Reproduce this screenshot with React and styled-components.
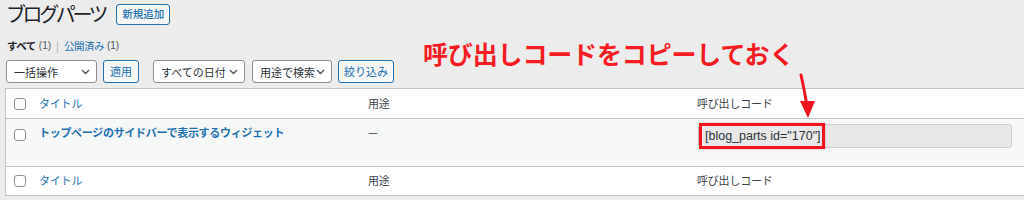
import React from "react";
import styled, { createGlobalStyle } from "styled-components";

const Global = createGlobalStyle`
  html, body { margin: 0; padding: 0; background: #ececec; }
  body { width: 1024px; height: 200px; overflow: hidden; font-family: "Noto Sans CJK JP", "Noto Sans", sans-serif; color: #2c3338; }
`;

const Page = styled.div`
  position: relative;
  padding: 0 0 0 5px;
  width: 1060px;
`;

const HeadRow = styled.div`
  display: flex;
  align-items: center;
  height: 28px;
  gap: 9px;
  padding-left: 1px;
`;

const Title = styled.h1`
  margin: 0;
  font-size: 20px;
  font-weight: 400;
  color: #1d2327;
  line-height: 28px;
  letter-spacing: -3.4px;
  padding-right: 2px;
`;

const Button = styled.button`
  box-sizing: border-box;
  height: ${p => p.$h || 23}px;
  width: ${p => p.$w}px;
  padding: 0;
  border: 1px solid #2271b1;
  border-radius: 3px;
  background: #f6f7f7;
  color: #2271b1;
  font-family: inherit;
  font-size: ${p => p.$fs || 11}px;
  font-weight: ${p => p.$medium ? 500 : 400};
  line-height: 1;
  white-space: nowrap;
  display: flex;
  align-items: center;
  justify-content: center;
`;

const SubSub = styled.div`
  margin-top: 9px;
  display: flex;
  align-items: center;
  gap: 3px;
  height: 16px;
  padding-left: 2px;
  font-size: 10.5px;
  white-space: nowrap;
`;

const Strong = styled.span`
  font-weight: 700;
  color: #1d2327;
  letter-spacing: -0.5px;
`;
const Count = styled.span`
  color: #50575e;
  font-size: 10px;
  font-family: "Liberation Sans", Arial, sans-serif;
`;
const Sep = styled.span`
  color: #a7aaad;
  margin: 0 2px;
`;
const Link = styled.span`
  color: #2271b1;
  letter-spacing: -0.5px;
`;

const Filters = styled.div`
  margin-top: 7px;
  display: flex;
  align-items: center;
  padding-left: 1px;
`;

const Select = styled.div`
  box-sizing: border-box;
  width: ${p => p.$w}px;
  height: 23px;
  border: 1px solid #8c8f94;
  border-radius: 3px;
  background: #fff;
  display: flex;
  align-items: center;
  justify-content: space-between;
  padding: 0 6px 0 7px;
  font-size: 11px;
  color: #2c3338;
  white-space: nowrap;
  flex: none;
`;

const Gap = styled.div`
  width: ${p => p.$w}px;
  flex: none;
`;

const Chevron = () => (
  <svg width="9" height="6" viewBox="0 0 9 6">
    <path d="M1 1 L4.5 4.5 L8 1" fill="none" stroke="#50575e" strokeWidth="1.4" />
  </svg>
);

const Table = styled.div`
  margin-top: 5px;
  border: 1px solid #c3c4c7;
  background: #fff;
  width: 1040px;
`;

const Row = styled.div`
  display: grid;
  grid-template-columns: 25px 329px 329px 1fr;
  align-items: ${p => p.$top ? "start" : "center"};
  height: ${p => p.$h}px;
  background: ${p => p.$alt ? "#f6f7f7" : "#fff"};
  border-top: ${p => p.$line ? "1px solid #c3c4c7" : "none"};
  font-size: 11px;
  box-sizing: border-box;
  padding-top: ${p => p.$pt || 0}px;
  padding-bottom: ${p => p.$pb || 0}px;
`;

const CheckCell = styled.div`
  padding-left: 8px;
  display: flex;
`;

const Check = styled.span`
  box-sizing: border-box;
  width: 12px;
  height: 12px;
  border: 1px solid #8c8f94;
  border-radius: 3px;
  background: #fff;
  margin-top: ${p => p.$mt || 0}px;
`;

const Cell = styled.div`
  padding-left: 8px;
  color: ${p => p.$link ? "#2271b1" : "#3c434a"};
  font-weight: ${p => p.$bold ? 700 : 400};
  line-height: 16px;
  white-space: nowrap;
  letter-spacing: ${p => p.$bold ? "-0.3px" : "-0.2px"};
`;

const CodeInput = styled.div`
  position: relative;
  box-sizing: border-box;
  margin-left: 9px;
  width: 314px;
  height: 24px;
  border: 1px solid #cfcfcf;
  border-radius: 3px;
  background: #e8e8e8;
  display: flex;
  align-items: center;
  padding-left: 6px;
  font-family: "Liberation Sans", Arial, sans-serif;
  font-size: 12.5px;
  color: #2c3338;
`;

const Highlight = styled.span`
  position: absolute;
  left: 0px;
  top: -2px;
  width: 126px;
  height: 26px;
  box-sizing: border-box;
  border: 3px solid #f0141e;
  box-shadow: 0 0 2px rgba(120,0,0,0.35);
`;

const Note = styled.div`
  position: absolute;
  left: 423px;
  top: 36px;
  font-size: 25px;
  font-weight: 700;
  line-height: 34px;
  color: #f51c24;
  white-space: nowrap;
  letter-spacing: -0.15px;
`;

const Arrow = styled.svg`
  position: absolute;
  left: 790px;
  top: 70px;
`;

export default function App() {
  return (
    <>
      <Global />
      <Page>
        <HeadRow>
          <Title>ブログパーツ</Title>
          <Button $w={54} $h={21} $fs={10.5} $medium>新規追加</Button>
        </HeadRow>
        <SubSub>
          <Strong>すべて</Strong>
          <Count>(1)</Count>
          <Sep>|</Sep>
          <Link>公開済み</Link>
          <Count>(1)</Count>
        </SubSub>
        <Filters>
          <Select $w={91}>一括操作<Chevron /></Select>
          <Gap $w={6} />
          <Button $w={36}>適用</Button>
          <Gap $w={14} />
          <Select $w={92}>すべての日付<Chevron /></Select>
          <Gap $w={7} />
          <Select $w={80}>用途で検索<Chevron /></Select>
          <Gap $w={6} />
          <Button $w={56}>絞り込み</Button>
        </Filters>
        <Table>
          <Row $h={29} $pb={2}>
            <CheckCell><Check $mt={2} /></CheckCell>
            <Cell $link>タイトル</Cell>
            <Cell>用途</Cell>
            <Cell>呼び出しコード</Cell>
          </Row>
          <Row $h={48} $alt $line $top $pt={5}>
            <CheckCell><Check $mt={5} /></CheckCell>
            <Cell $link $bold>トップページのサイドバーで表示するウィジェット</Cell>
            <Cell>—</Cell>
            <div>
              <CodeInput>
                [blog_parts id="170"]
                <Highlight />
              </CodeInput>
            </div>
          </Row>
          <Row $h={29} $line $pb={2}>
            <CheckCell><Check $mt={2} /></CheckCell>
            <Cell $link>タイトル</Cell>
            <Cell>用途</Cell>
            <Cell>呼び出しコード</Cell>
          </Row>
        </Table>
        <Note>呼び出しコードをコピーしておく</Note>
        <Arrow width="30" height="52" viewBox="0 0 30 52">
          <path d="M11 5 Q14 18 16.5 33" fill="none" stroke="#f0141e" strokeWidth="3" strokeLinecap="round" />
          <path d="M10 31 L25 31 L18 48 Z" fill="#f0141e" />
        </Arrow>
      </Page>
    </>
  );
}
